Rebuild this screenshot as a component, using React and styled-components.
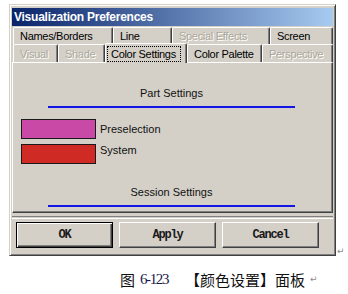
import React from "react";
import styled, { createGlobalStyle } from "styled-components";

const GlobalStyle = createGlobalStyle`
  body {
    margin: 0;
    background: #ffffff;
    font-family: "Liberation Sans", Arial, sans-serif;
  }
`;

const FACE = "#d4d0c8";
const SHADOW = "#808080";
const DARK = "#404040";

const row1 = [
  { label: "Names/Borders", w: 100 },
  { label: "Line", w: 59 },
  { label: "Special Effects", w: 98, disabled: true },
  { label: "Screen", w: 63 },
];

const row2 = [
  { label: "Visual", w: 45, disabled: true },
  { label: "Shade", w: 47, disabled: true },
  { label: "Color Settings", w: 82, selected: true },
  { label: "Color Palette", w: 75 },
  { label: "Perspective", w: 71, disabled: true },
];

// lift = how far the label sits above the swatch's centre
const colors = [
  { label: "Preselection", color: "#c84aa6", lift: 0 },
  { label: "System", color: "#d02a24", lift: 4 },
];

export default function App() {
  return (
    <Page>
      <GlobalStyle />
      <Figure>
        <Dialog>
          <TitleBar>Visualization Preferences</TitleBar>
          <Tabs>
            <TabRow $h={17}>
              {row1.map((t) => (
                <Tab key={t.label} $w={t.w} $disabled={t.disabled}>
                  {t.label}
                </Tab>
              ))}
            </TabRow>
            <TabRow $h={18}>
              {row2.map((t) => (
                <Tab
                  key={t.label}
                  $w={t.w}
                  $disabled={t.disabled}
                  $selected={t.selected}
                >
                  {t.selected ? <Focus>{t.label}</Focus> : t.label}
                </Tab>
              ))}
            </TabRow>
          </Tabs>
          <Panel>
            <SectionTitle $top={23}>Part Settings</SectionTitle>
            <BlueRule />
            <ColorList>
              {colors.map((c) => (
                <ColorRow key={c.label}>
                  <Swatch $color={c.color} />
                  <ColorLabel $lift={c.lift}>{c.label}</ColorLabel>
                </ColorRow>
              ))}
            </ColorList>
            <SectionTitle $top={21}>Session Settings</SectionTitle>
            <BlueRule />
          </Panel>
          <Groove />
          <Buttons>
            <Button $default>OK</Button>
            <Button>Apply</Button>
            <Button>Cancel</Button>
          </Buttons>
        </Dialog>
        <Mark>↵</Mark>
      </Figure>
      <Caption>
        <CjkText>图</CjkText>
        <FigNum>6-123</FigNum>
        <CjkText>【颜色设置】面板</CjkText>
        <Mark>↵</Mark>
      </Caption>
    </Page>
  );
}

const Page = styled.div`
  padding: 4px 0 0 9px;
`;

const Figure = styled.div`
  display: flex;
  align-items: flex-end;
  gap: 1px;
`;

const Dialog = styled.div`
  box-sizing: border-box;
  width: 327px;
  height: 252px;
  background: ${FACE};
  border: 1px solid;
  border-color: ${FACE} ${DARK} ${DARK} ${FACE};
  box-shadow: inset 1px 1px #ffffff, inset -1px -1px ${SHADOW};
  padding: 3px 2px 0;
  display: flex;
  flex-direction: column;
`;

const TitleBar = styled.div`
  height: 18px;
  display: flex;
  align-items: center;
  padding-left: 2px;
  background: linear-gradient(to right, #0a246a, #a6caf0);
  color: #ffffff;
  font-weight: bold;
  font-size: 12px;
  letter-spacing: -0.25px;
`;

const Tabs = styled.div`
  margin-top: 1px;
  padding-left: 1px;
  display: flex;
  flex-direction: column;
`;

const TabRow = styled.div`
  display: flex;
  height: ${(p) => p.$h}px;
`;

const Tab = styled.div`
  box-sizing: border-box;
  width: ${(p) => p.$w}px;
  display: flex;
  align-items: center;
  background: ${FACE};
  border-top: 1px solid #ffffff;
  border-left: 1px solid #ffffff;
  border-right: 1px solid ${DARK};
  border-radius: 2px 2px 0 0;
  box-shadow: inset -1px 0 ${SHADOW};
  font-size: 11px;
  letter-spacing: -0.3px;
  white-space: nowrap;
  color: ${(p) => (p.$disabled ? "#aca899" : "#000000")};
  text-shadow: ${(p) => (p.$disabled ? "1px 1px #ffffff" : "none")};
  position: relative;
  z-index: ${(p) => (p.$selected ? 2 : 1)};
  margin-top: ${(p) => (p.$selected ? "-1px" : "0")};
  margin-bottom: ${(p) => (p.$selected ? "-1px" : "0")};
  padding-left: ${(p) => (p.$selected ? "2px" : "6px")};
`;

const Focus = styled.span`
  outline: 1px dotted #000000;
  padding: 1px 4px 1px 3px;
`;

const Panel = styled.div`
  box-sizing: border-box;
  height: 151px;
  border-top: 1px solid #ffffff;
  border-left: 1px solid #ffffff;
  border-right: 1px solid ${DARK};
  border-bottom: 1px solid ${DARK};
  box-shadow: inset -1px -1px ${SHADOW};
  display: flex;
  flex-direction: column;
`;

const SectionTitle = styled.div`
  margin-top: ${(p) => p.$top}px;
  height: 14px;
  line-height: 14px;
  text-align: center;
  font-size: 11px;
  color: #101010;
  padding-right: 2px;
`;

const BlueRule = styled.div`
  margin: 6px 0 0 35px;
  width: 247px;
  height: 2px;
  background: #1414e6;
`;

const ColorList = styled.div`
  margin-top: 11px;
  padding-left: 8px;
  display: flex;
  flex-direction: column;
  gap: 5px;
`;

const ColorRow = styled.div`
  display: flex;
  align-items: center;
  gap: 4px;
`;

const Swatch = styled.div`
  box-sizing: border-box;
  width: 75px;
  height: 20px;
  background: ${(p) => p.$color};
  border: 1px solid #1a1a1a;
`;

const ColorLabel = styled.span`
  font-size: 11px;
  color: #101010;
  margin-bottom: ${(p) => p.$lift * 2}px;
`;

const Groove = styled.div`
  margin-top: 3px;
  height: 1px;
  border-top: 1px solid ${SHADOW};
  border-bottom: 1px solid #ffffff;
`;

const Buttons = styled.div`
  margin-top: 3px;
  padding-left: 4px;
  display: flex;
  gap: 6px;
`;

const Button = styled.button`
  box-sizing: border-box;
  width: 97px;
  height: 26px;
  padding: 0;
  background: ${FACE};
  border: 1px solid;
  border-color: ${(p) =>
    p.$default ? "#000000" : `#ffffff ${DARK} ${DARK} #ffffff`};
  box-shadow: ${(p) =>
    p.$default
      ? `inset 1px 1px #ffffff, inset -1px -1px ${DARK}, inset -2px -2px ${SHADOW}`
      : `inset -1px -1px ${SHADOW}`};
  font-family: "Liberation Mono", "Courier New", monospace;
  font-weight: bold;
  font-size: 12px;
  letter-spacing: -1.2px;
  color: #1a1a1a;
`;

const Mark = styled.span`
  font-size: 9px;
  line-height: 9px;
  color: #8a8a8a;
  font-family: "DejaVu Sans", sans-serif;
`;

const Caption = styled.div`
  margin: 13px 0 0 111px;
  height: 20px;
  display: flex;
  align-items: center;
  gap: 5px;
`;

const CjkText = styled.span`
  font-family: "Noto Sans CJK SC", sans-serif;
  font-size: 15px;
  color: #111111;
`;

const FigNum = styled.span`
  font-family: "Liberation Serif", "Times New Roman", serif;
  font-size: 15px;
  letter-spacing: -1.4px;
  color: #1a1a4a;
  margin-right: 12px;
`;
